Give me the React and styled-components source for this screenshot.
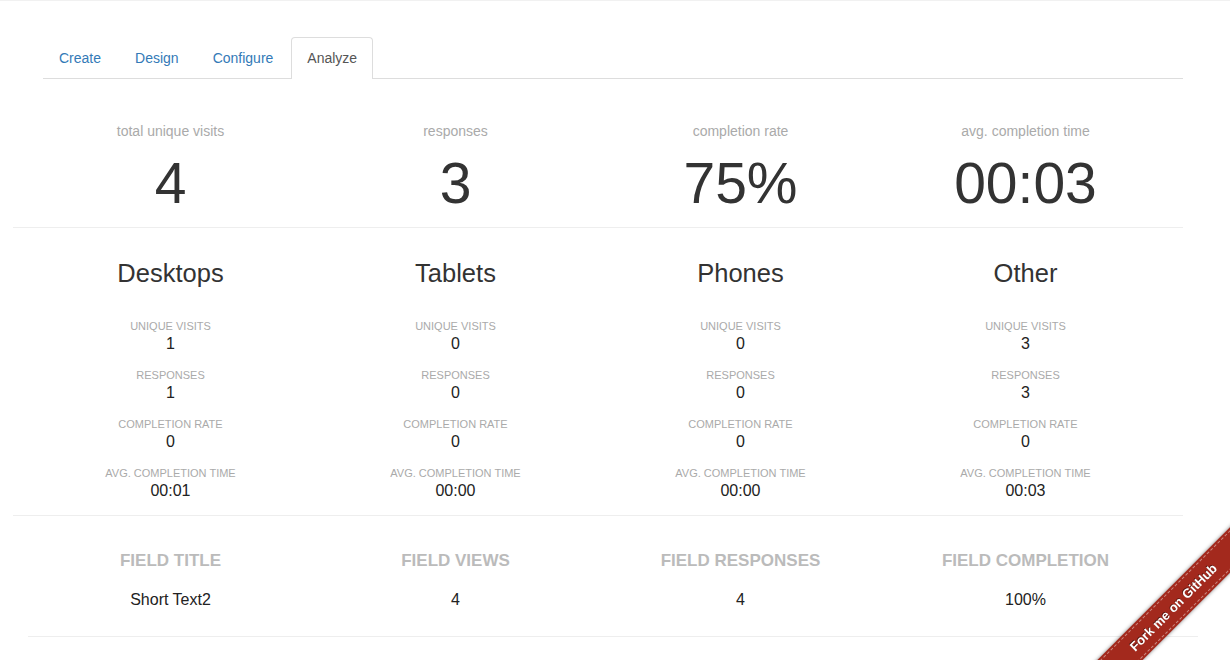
import React from "react";
import styled, { createGlobalStyle } from "styled-components";

const GlobalStyle = createGlobalStyle`
  body {
    margin: 0;
    background: #fff;
    font-family: "Liberation Sans", Arial, sans-serif;
    color: #333;
  }
`;

const Shell = styled.div`
  border-top: 1px solid #f1f1f1;
`;

const Page = styled.div`
  width: 1170px;
  margin-left: 13px;
`;

const Tabs = styled.ul`
  display: flex;
  list-style: none;
  margin: 36px 0 0 30px;
  padding: 0;
  border-bottom: 1px solid #ddd;
`;

const Tab = styled.li`
  padding: 10px 15px ${(p) => (p.$active ? "11px" : "10px")};
  font-size: 14px;
  line-height: 20px;
  border: ${(p) => (p.$active ? "1px solid #ddd" : "0")};
  border-bottom: 0;
  border-radius: 4px 4px 0 0;
  background: ${(p) => (p.$active ? "#fff" : "transparent")};
  color: ${(p) => (p.$active ? "#555" : "#337ab7")};
  margin: ${(p) => (p.$active ? "0 2px -1px 0" : "1px 3px 0 1px")};
  cursor: ${(p) => (p.$active ? "default" : "pointer")};
`;

const Row = styled.div`
  display: grid;
  grid-template-columns: repeat(4, 285px);
  margin-left: 15px;
  text-align: center;
`;

const StatsRow = styled(Row)`
  padding-top: 42px;
`;

const StatLabel = styled.div`
  font-size: 14px;
  line-height: 20px;
  color: #aaa;
`;

const StatValue = styled.div`
  margin-top: 9px;
  font-size: 57px;
  line-height: 66px;
  color: #333;
`;

const Divider = styled.hr`
  border: 0;
  border-top: 1px solid #eee;
  margin: ${(p) => p.$top || 0}px 0 0;
`;

const DeviceRow = styled(Row)`
  padding-top: 32px;
`;

const DeviceTitle = styled.h3`
  margin: 0 0 31px;
  font-size: 25.5px;
  font-weight: normal;
  line-height: 27.5px;
  color: #333;
`;

const Metric = styled.div`
  margin-bottom: 14px;
`;

const MetricLabel = styled.div`
  font-size: 11px;
  line-height: 14px;
  color: #aaa;
  text-transform: uppercase;
`;

const MetricValue = styled.div`
  margin-top: 1px;
  font-size: 16px;
  line-height: 20px;
  color: #222;
`;

const FieldTable = styled.div`
  margin-left: 15px;
  width: 1170px;
  border-bottom: 1px solid #eee;
`;

const FieldHead = styled(Row)`
  margin: 0;
  padding-top: 33px;
  font-size: 17px;
  line-height: 24px;
  font-weight: bold;
  color: #bbb;
  text-transform: uppercase;
`;

const FieldBody = styled(Row)`
  margin: 0;
  padding: 16px 0 25px;
  font-size: 16px;
  line-height: 22px;
  color: #222;
`;

const RibbonCorner = styled.div`
  position: fixed;
  right: 0;
  bottom: 0;
  width: 150px;
  height: 150px;
  overflow: hidden;
  pointer-events: none;
`;

const Ribbon = styled.a`
  position: absolute;
  left: -32px;
  top: 81px;
  width: 250px;
  height: 32px;
  display: flex;
  align-items: center;
  justify-content: center;
  transform: rotate(-45deg);
  background: #a3291d;
  color: #fff;
  font-size: 13px;
  font-weight: bold;
  text-decoration: none;
  text-shadow: 0 -1px 0 rgba(0, 0, 0, 0.5);
  box-shadow: 0 0 4px rgba(0, 0, 0, 0.5);
  pointer-events: auto;

  &::before,
  &::after {
    content: "";
    position: absolute;
    left: 0;
    right: 0;
    height: 0;
    border-top: 1px dashed rgba(255, 255, 255, 0.45);
  }
  &::before {
    top: 2px;
  }
  &::after {
    bottom: 2px;
  }
`;

const stats = [
  { label: "total unique visits", value: "4" },
  { label: "responses", value: "3" },
  { label: "completion rate", value: "75%" },
  { label: "avg. completion time", value: "00:03" },
];

const devices = [
  { name: "Desktops", visits: "1", responses: "1", rate: "0", time: "00:01" },
  { name: "Tablets", visits: "0", responses: "0", rate: "0", time: "00:00" },
  { name: "Phones", visits: "0", responses: "0", rate: "0", time: "00:00" },
  { name: "Other", visits: "3", responses: "3", rate: "0", time: "00:03" },
];

const App = () => {
  return (
    <Shell>
      <GlobalStyle />
      <Page>
        <Tabs>
          <Tab>Create</Tab>
          <Tab>Design</Tab>
          <Tab>Configure</Tab>
          <Tab $active>Analyze</Tab>
        </Tabs>

        <StatsRow>
          {stats.map((s) => (
            <div key={s.label}>
              <StatLabel>{s.label}</StatLabel>
              <StatValue>{s.value}</StatValue>
            </div>
          ))}
        </StatsRow>

        <Divider $top={11} />

        <DeviceRow>
          {devices.map((d) => (
            <div key={d.name}>
              <DeviceTitle>{d.name}</DeviceTitle>
              <Metric>
                <MetricLabel>Unique visits</MetricLabel>
                <MetricValue>{d.visits}</MetricValue>
              </Metric>
              <Metric>
                <MetricLabel>Responses</MetricLabel>
                <MetricValue>{d.responses}</MetricValue>
              </Metric>
              <Metric>
                <MetricLabel>Completion rate</MetricLabel>
                <MetricValue>{d.rate}</MetricValue>
              </Metric>
              <Metric>
                <MetricLabel>Avg. completion time</MetricLabel>
                <MetricValue>{d.time}</MetricValue>
              </Metric>
            </div>
          ))}
        </DeviceRow>

        <Divider />

        <FieldTable>
          <FieldHead>
            <div>Field title</div>
            <div>Field views</div>
            <div>Field responses</div>
            <div>Field completion</div>
          </FieldHead>
          <FieldBody>
            <div>Short Text2</div>
            <div>4</div>
            <div>4</div>
            <div>100%</div>
          </FieldBody>
        </FieldTable>
      </Page>

      <RibbonCorner>
        <Ribbon href="#">Fork me on GitHub</Ribbon>
      </RibbonCorner>
    </Shell>
  );
};

export default App;
